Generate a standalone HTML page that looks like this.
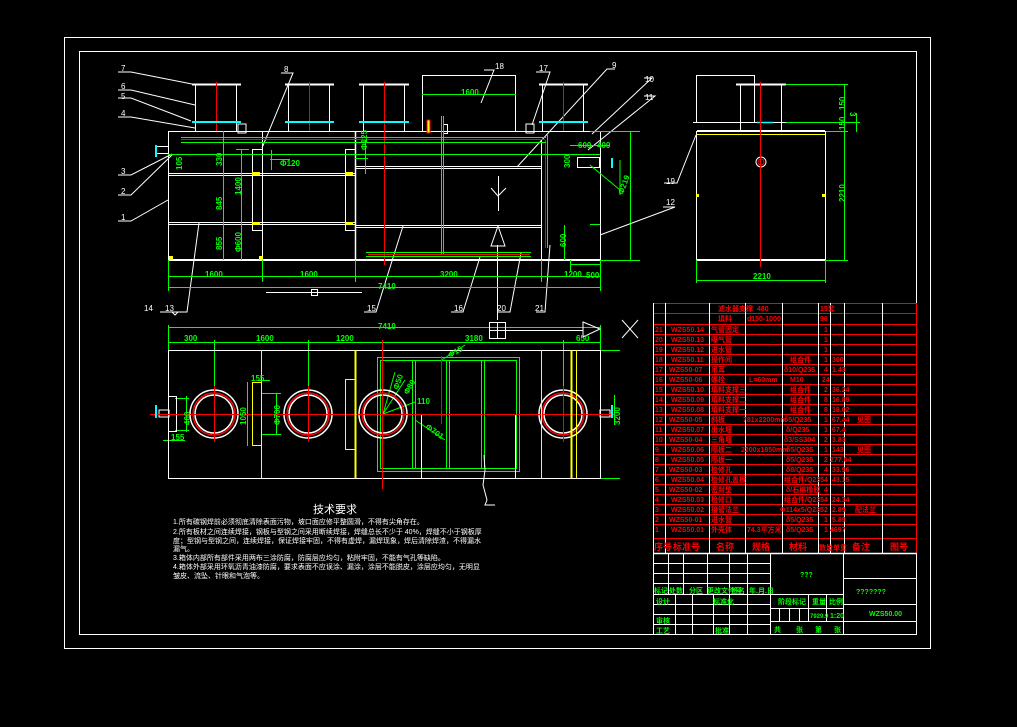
<!DOCTYPE html>
<html><head><meta charset="utf-8"><style>
html,body{margin:0;padding:0;background:#000;width:1017px;height:727px;overflow:hidden}
svg{display:block}
text{font-family:"Liberation Sans","Noto Sans CJK SC",sans-serif}
</style></head><body>
<svg width="1017" height="727" viewBox="0 0 1017 727" xmlns="http://www.w3.org/2000/svg">
<rect width="1017" height="727" fill="#000"/>
<rect x="64.5" y="37.5" width="866" height="611" fill="none" stroke="#fff" stroke-width="1"/>
<rect x="79.5" y="51.5" width="837" height="583" fill="none" stroke="#fff" stroke-width="1"/>

<g stroke="#fff" fill="none" stroke-width="1">
<rect x="168.5" y="131.5" width="432" height="129"/>
<line x1="168" y1="260" x2="600" y2="260" stroke-width="2"/>
<line x1="169" y1="173.5" x2="355" y2="173.5"/><line x1="169" y1="175.5" x2="355" y2="175.5"/>
<line x1="169" y1="222.5" x2="355" y2="222.5"/><line x1="169" y1="224.5" x2="355" y2="224.5"/>
<line x1="356" y1="166.5" x2="541" y2="166.5"/><line x1="356" y1="168.5" x2="541" y2="168.5"/>
<line x1="356" y1="225.5" x2="541" y2="225.5"/><line x1="356" y1="227.5" x2="541" y2="227.5"/>
<line x1="355.5" y1="131" x2="355.5" y2="260" stroke-width="1.5"/>
<line x1="262.5" y1="131" x2="262.5" y2="260"/>
<rect x="252.5" y="149.5" width="10" height="81"/>
<rect x="345.5" y="149.5" width="10" height="81"/>
<line x1="541.5" y1="140" x2="541.5" y2="260"/>
<g>
<line x1="192" y1="84.5" x2="241" y2="84.5" stroke-width="2"/><line x1="195.5" y1="85" x2="195.5" y2="131"/><line x1="236.5" y1="85" x2="236.5" y2="131"/>
<line x1="285" y1="84.5" x2="334" y2="84.5" stroke-width="2"/><line x1="288.5" y1="85" x2="288.5" y2="131"/><line x1="329.5" y1="85" x2="329.5" y2="131"/>
<line x1="359" y1="84.5" x2="409" y2="84.5" stroke-width="2"/><line x1="363.5" y1="85" x2="363.5" y2="131"/><line x1="404.5" y1="85" x2="404.5" y2="131"/>
<line x1="539" y1="84.5" x2="588" y2="84.5" stroke-width="2"/><line x1="542.5" y1="85" x2="542.5" y2="131"/><line x1="583.5" y1="85" x2="583.5" y2="131"/>
<rect x="422.5" y="75.5" width="93" height="56"/>
</g>
<rect x="443.5" y="124.5" width="4" height="9"/>
<rect x="238" y="124" width="8" height="9"/><rect x="526" y="124" width="8" height="9"/>
<rect x="577.5" y="157.5" width="22" height="10"/>
<rect x="156.5" y="146.5" width="12" height="7"/>
<polyline points="118,72 131,72 192,84"/>
<polyline points="118,90 131,90 195,105"/>
<polyline points="118,98 131,98 191,121"/>
<polyline points="118,117 131,117 195,128"/>
<polyline points="118,175 131,175 172,154"/>
<polyline points="118,195 131,195 172,155"/>
<polyline points="118,221 131,221 168,200"/>
<polyline points="281,73 293,73 262,148"/>
<polyline points="160,312 180,312"/><polyline points="172,312 175,315 178,312"/>
<polyline points="173,312 187,312 199,223"/>
<polyline points="364,312 376,312 403,226"/>
<polyline points="451,312 463,312 480,257"/>
<polyline points="497,312 510,312 521,253"/>
<polyline points="536,312 545,312 550,245"/>
<polyline points="484,70 494,70 481,103"/>
<polyline points="536,72 550,72 532,125"/>
<polyline points="615,69 607,69 517,167"/>
<polyline points="644,78 652,78 592,134"/>
<polyline points="644,96 655,96 588,150"/>
<line x1="266" y1="292.5" x2="362" y2="292.5"/><rect x="311.5" y="289.5" width="6" height="6"/>
<line x1="498.5" y1="176" x2="498.5" y2="211"/><polyline points="491,188 498,196 506,188"/>
<polygon points="498,226 491,246 505,246"/>
<line x1="497.5" y1="245" x2="497.5" y2="320"/>
</g>
<g stroke="#f00" stroke-width="1">
<line x1="216.5" y1="82" x2="216.5" y2="131"/><line x1="309.5" y1="82" x2="309.5" y2="131"/>
<line x1="384.5" y1="82" x2="384.5" y2="265"/><line x1="563.5" y1="82" x2="563.5" y2="131"/>
<line x1="181" y1="139.5" x2="545" y2="139.5"/>
<line x1="368" y1="254.5" x2="530" y2="254.5"/>
<line x1="545.5" y1="140" x2="545.5" y2="248"/>
<rect x="427" y="120" width="3" height="13" fill="#ff0"/>
</g>
<g stroke="#0ff" stroke-width="2">
<line x1="192" y1="122" x2="241" y2="122"/><line x1="285" y1="122" x2="334" y2="122"/>
<line x1="359" y1="122" x2="409" y2="122"/><line x1="539" y1="122" x2="588" y2="122"/>
<line x1="156" y1="145" x2="156" y2="157"/>
<line x1="612" y1="158" x2="612" y2="168"/>
</g>
<g stroke="#0f0" fill="none" stroke-width="1">
<line x1="181" y1="137.5" x2="546" y2="137.5"/><line x1="181" y1="142.5" x2="546" y2="142.5"/>
<line x1="168" y1="154.5" x2="600" y2="154.5"/>
<line x1="441.5" y1="116" x2="441.5" y2="254"/><line x1="443.5" y1="116" x2="443.5" y2="254"/>
<line x1="366" y1="252.5" x2="531" y2="252.5"/><line x1="366" y1="256.5" x2="531" y2="256.5"/>
<line x1="547.5" y1="134" x2="547.5" y2="248"/>
<line x1="223.5" y1="131" x2="223.5" y2="260"/>
<line x1="241.5" y1="149" x2="241.5" y2="260"/>
<line x1="168.5" y1="260" x2="168.5" y2="291"/>
<line x1="600.5" y1="260" x2="600.5" y2="291"/>
<line x1="262.5" y1="260" x2="262.5" y2="282"/>
<line x1="355.5" y1="260" x2="355.5" y2="282"/>
<line x1="541.5" y1="260" x2="541.5" y2="282"/>
<line x1="168" y1="276.5" x2="600" y2="276.5"/>
<line x1="168" y1="287.5" x2="600" y2="287.5"/>
<line x1="422" y1="94.5" x2="516" y2="94.5"/>
<line x1="590" y1="131.5" x2="640" y2="131.5"/>
<line x1="570" y1="145.5" x2="610" y2="145.5"/>
<line x1="600" y1="260.5" x2="640" y2="260.5"/>
<line x1="590" y1="224.5" x2="600" y2="224.5"/>
<line x1="564.5" y1="225" x2="564.5" y2="260"/>
<line x1="570" y1="264.5" x2="600" y2="264.5"/>
<line x1="570.5" y1="260" x2="570.5" y2="272"/>
<line x1="236" y1="149.5" x2="249" y2="149.5"/><line x1="270" y1="159.5" x2="290" y2="159.5"/>
<line x1="271.5" y1="150" x2="271.5" y2="170"/>
<line x1="355" y1="158.5" x2="368" y2="158.5"/>
<line x1="365.5" y1="140" x2="365.5" y2="174"/>
<line x1="590" y1="165" x2="620" y2="190"/>
<line x1="620" y1="160" x2="620" y2="195"/>
<line x1="630.5" y1="131" x2="630.5" y2="260"/>
</g>
<g fill="#0f0" font-size="9" font-weight="bold">
<text x="205" y="277" font-size="8">1600</text><text x="300" y="277" font-size="8">1600</text>
<text x="440" y="277" font-size="8">3200</text><text x="564" y="277" font-size="8">1200</text>
<text x="378" y="289" font-size="8">7410</text>
<text x="461" y="95" font-size="8">1600</text>
<text x="280" y="166" font-size="8">Φ120</text>
<text x="578" y="148" font-size="8">600</text><text x="597" y="148" font-size="8">400</text>
<text x="586" y="278" font-size="8">500</text>
<text transform="translate(222,166) rotate(-90)" font-size="8">330</text>
<text transform="translate(222,210) rotate(-90)" font-size="8">845</text>
<text transform="translate(222,250) rotate(-90)" font-size="8">855</text>
<text transform="translate(241,195) rotate(-90)" font-size="8">1400</text>
<text transform="translate(241,252) rotate(-90)" font-size="8">Φ600</text>
<text transform="translate(182,170) rotate(-90)" font-size="8">105</text>
<text transform="translate(367,150) rotate(-90)" font-size="8">Φ125</text>
<text transform="translate(566,247) rotate(-90)" font-size="8">600</text>
<text transform="translate(570,168) rotate(-90)" font-size="8">300</text>
<text transform="translate(623,195) rotate(-70)" font-size="8">Φ219</text>
</g>
<g fill="#fff" font-size="8">
<text x="121" y="71">7</text><text x="121" y="89">6</text><text x="121" y="99">5</text><text x="121" y="116">4</text>
<text x="121" y="174">3</text><text x="121" y="194">2</text><text x="121" y="220">1</text>
<text x="284" y="72">8</text><text x="495" y="69">18</text><text x="539" y="71">17</text><text x="612" y="68">9</text>
<text x="645" y="82">10</text><text x="645" y="100">11</text><text x="666" y="205">12</text><text x="666" y="184">19</text>
<text x="144" y="311">14</text><text x="165" y="311">13</text><text x="367" y="311">15</text>
<text x="454" y="311">16</text><text x="497" y="311">20</text><text x="535" y="311">21</text>
</g>
<g fill="#ff0">
<rect x="169" y="256" width="4" height="4"/><rect x="259" y="256" width="4" height="4"/>
<rect x="252" y="172" width="8" height="3"/><rect x="252" y="222" width="8" height="3"/>
<rect x="345" y="172" width="8" height="3"/><rect x="345" y="222" width="8" height="3"/>
</g>

<g stroke="#fff" fill="none">
<rect x="696.5" y="131.5" width="129" height="128"/>
<line x1="696" y1="260" x2="826" y2="260" stroke-width="2"/>
<rect x="696.5" y="75.5" width="58" height="47"/>
<line x1="736" y1="84.5" x2="786" y2="84.5" stroke-width="2"/>
<line x1="740.5" y1="85" x2="740.5" y2="131"/><line x1="781.5" y1="85" x2="781.5" y2="131"/>
<line x1="693" y1="122.5" x2="786" y2="122.5"/>
<line x1="697" y1="130.5" x2="825" y2="130.5"/>
<polyline points="664,183 677,183 696,135"/>
<polyline points="663,207 675,207 600,235"/>
<circle cx="761" cy="162" r="5"/>
</g>
<line x1="697" y1="134.5" x2="825" y2="134.5" stroke="#ff0"/>
<line x1="757" y1="122.5" x2="773" y2="122.5" stroke="#0ff" stroke-width="1.5"/>
<line x1="760.5" y1="82" x2="760.5" y2="267" stroke="#f00"/>
<circle cx="761" cy="162" r="3" fill="none" stroke="#f00"/>
<rect x="696" y="194" width="3" height="3" fill="#ff0"/><rect x="822" y="194" width="3" height="3" fill="#ff0"/>
<g stroke="#0f0" fill="none">
<line x1="786" y1="84.5" x2="848" y2="84.5"/><line x1="786" y1="122.5" x2="860" y2="122.5"/>
<line x1="826" y1="131.5" x2="848" y2="131.5"/><line x1="826" y1="260.5" x2="848" y2="260.5"/>
<line x1="844.5" y1="84" x2="844.5" y2="260"/>
<line x1="856.5" y1="113" x2="856.5" y2="132"/>
<line x1="696.5" y1="260" x2="696.5" y2="283"/><line x1="825.5" y1="260" x2="825.5" y2="283"/>
<line x1="696" y1="280.5" x2="826" y2="280.5"/>
</g>
<g fill="#0f0" font-size="8" font-weight="bold">
<text x="753" y="279">2210</text>
<text transform="translate(845,110) rotate(-90)">150</text>
<text transform="translate(845,130) rotate(-90)">150</text>
<text transform="translate(845,202) rotate(-90)">2210</text>
<text transform="translate(850,112) rotate(90)">3</text>
</g>

<g stroke="#0f0" fill="none">
<line x1="168" y1="327.5" x2="600" y2="327.5"/>
<line x1="168" y1="342.5" x2="600" y2="342.5"/>
<line x1="168.5" y1="325" x2="168.5" y2="350"/><line x1="600.5" y1="325" x2="600.5" y2="350"/>
<line x1="214.5" y1="340" x2="214.5" y2="414"/><line x1="308.5" y1="340" x2="308.5" y2="414"/>
<line x1="563.5" y1="340" x2="563.5" y2="414"/>
<rect x="377.5" y="357.5" width="142" height="114"/>
<rect x="380.5" y="360.5" width="136" height="108"/>
<line x1="412.5" y1="360" x2="412.5" y2="469"/><line x1="415.5" y1="360" x2="415.5" y2="469"/>
<line x1="446.5" y1="360" x2="446.5" y2="469"/><line x1="449.5" y1="360" x2="449.5" y2="469"/>
<line x1="481.5" y1="360" x2="481.5" y2="469"/><line x1="484.5" y1="360" x2="484.5" y2="469"/>
<line x1="383" y1="414" x2="395" y2="372"/><line x1="383" y1="414" x2="405" y2="380"/>
<line x1="383" y1="414" x2="415" y2="402"/><line x1="415" y1="420" x2="445" y2="440"/>
<line x1="440" y1="361" x2="465" y2="345"/>
<line x1="175" y1="398.5" x2="189" y2="398.5"/><line x1="175" y1="430.5" x2="189" y2="430.5"/>
<line x1="186.5" y1="396" x2="186.5" y2="432"/>
<line x1="163" y1="440.5" x2="185" y2="440.5"/>
<line x1="247.5" y1="382" x2="247.5" y2="446"/>
<line x1="258" y1="380.5" x2="270" y2="380.5"/>
<line x1="261" y1="393.5" x2="281" y2="393.5"/><line x1="261" y1="434.5" x2="281" y2="434.5"/>
<line x1="276.5" y1="393" x2="276.5" y2="434"/>
<line x1="600" y1="350.5" x2="620" y2="350.5"/><line x1="600" y1="478.5" x2="620" y2="478.5"/>
<line x1="614.5" y1="395" x2="614.5" y2="425"/>
</g>
<g stroke="#fff" fill="none">
<rect x="168.5" y="350.5" width="432" height="128"/>
<rect x="168.5" y="396.5" width="8" height="35"/>
<rect x="421.5" y="414.5" width="94" height="64"/>
<rect x="489.5" y="322.5" width="16" height="16"/><line x1="497.5" y1="323" x2="497.5" y2="338"/><line x1="490" y1="330.5" x2="505" y2="330.5"/>
<line x1="505" y1="330.5" x2="583" y2="330.5"/>
<polygon points="583,322 600,329 583,337"/>
<line x1="622" y1="320" x2="638" y2="338"/><line x1="638" y1="320" x2="622" y2="338"/>
<polyline points="484,455 485,470 483,485 487,500 485,505 495,505"/>
<rect x="159" y="410" width="10" height="7"/><rect x="600" y="410" width="10" height="7"/>
</g>
<g stroke-width="1.5" fill="none">
<circle cx="214" cy="414" r="24" stroke="#fff"/><circle cx="214" cy="414" r="21" stroke="#f00"/><circle cx="214" cy="414" r="19" stroke="#fff"/>
<circle cx="308" cy="414" r="24" stroke="#fff"/><circle cx="308" cy="414" r="21" stroke="#f00"/><circle cx="308" cy="414" r="19" stroke="#fff"/>
<circle cx="383" cy="414" r="24" stroke="#fff"/><circle cx="383" cy="414" r="21" stroke="#f00"/><circle cx="383" cy="414" r="19" stroke="#fff"/>
<circle cx="563" cy="414" r="24" stroke="#fff"/><circle cx="563" cy="414" r="21" stroke="#f00"/><circle cx="563" cy="414" r="19" stroke="#fff"/>
</g>
<g stroke="#f00">
<line x1="150" y1="414.5" x2="615" y2="414.5"/>
<line x1="214.5" y1="386" x2="214.5" y2="442"/><line x1="308.5" y1="386" x2="308.5" y2="442"/>
<line x1="382.5" y1="340" x2="382.5" y2="489"/><line x1="563.5" y1="386" x2="563.5" y2="442"/>
<line x1="441.5" y1="356" x2="441.5" y2="424"/>
</g>
<g stroke="#ff0" fill="none">
<line x1="261.5" y1="350" x2="261.5" y2="478"/>
<line x1="355.5" y1="350" x2="355.5" y2="478" stroke-width="2"/>
<line x1="571.5" y1="350" x2="571.5" y2="478" stroke-width="2"/>
<line x1="576.5" y1="350" x2="576.5" y2="478"/>
<line x1="541.5" y1="350" x2="541.5" y2="478"/>
<rect x="252.5" y="382.5" width="9" height="63"/>
<rect x="345.5" y="379.5" width="10" height="70"/>
</g>
<line x1="156" y1="405" x2="156" y2="418" stroke="#0ff" stroke-width="2"/>
<line x1="612" y1="405" x2="612" y2="418" stroke="#0ff" stroke-width="2"/>
<g fill="#0f0" font-size="8" font-weight="bold">
<text x="184" y="341">300</text><text x="256" y="341">1600</text><text x="336" y="341">1200</text>
<text x="465" y="341">3180</text><text x="576" y="341">650</text><text x="378" y="329">7410</text>
<text x="251" y="381">155</text><text x="171" y="440">155</text>
<text transform="translate(190,425) rotate(-90)">400</text>
<text transform="translate(246,425) rotate(-90)">1050</text>
<text transform="translate(280,425) rotate(-90)">Φ700</text>
<text transform="translate(620,425) rotate(-90)">3200</text>
<text transform="translate(398,390) rotate(-70)">Φ50</text>
<text transform="translate(408,395) rotate(-60)">Φ80</text>
<text x="417" y="404">110</text>
<text transform="translate(425,428) rotate(35)">Φ701</text>
<text transform="translate(450,358) rotate(-30)">Φ15</text>
</g>

<g fill="#fff">
<text x="313" y="513" font-size="11">技术要求</text>
<g font-size="7">
<text x="173" y="524">1.所有碳钢焊前必须彻底清除表面污物，坡口面应修平整圆滑，不得有尖角存在。</text>
<text x="173" y="534">2.所有板材之间连续焊接，钢板与型钢之间采用断续焊接，焊缝总长不少于 40%，焊缝不小于钢板厚</text>
<text x="173" y="543">度；型钢与型钢之间，连续焊接，保证焊接牢固，不得有虚焊，漏焊现象，焊后清除焊渣，不得漏水</text>
<text x="173" y="551">漏气。</text>
<text x="173" y="560">3.箱体内部所有部件采用两布三涂防腐，防腐层应均匀，粘附牢固，不能有气孔等缺陷。</text>
<text x="173" y="569">4.箱体外部采用环氧沥青油漆防腐，要求表面不应误涂、漏涂，涂层不能脱皮，涂层应均匀，无明显</text>
<text x="173" y="578">皱皮、流坠、针眼和气泡等。</text>
</g>
</g>

<g stroke="#f00" stroke-width="1" fill="none">
<rect x="653.5" y="303.5" width="263" height="250"/>
<line x1="653" y1="313.5" x2="917" y2="313.5"/><line x1="653" y1="324.5" x2="917" y2="324.5"/>
<line x1="653" y1="334.5" x2="917" y2="334.5"/><line x1="653" y1="344.5" x2="917" y2="344.5"/>
<line x1="653" y1="354.5" x2="917" y2="354.5"/><line x1="653" y1="364.5" x2="917" y2="364.5"/>
<line x1="653" y1="374.5" x2="917" y2="374.5"/><line x1="653" y1="384.5" x2="917" y2="384.5"/>
<line x1="653" y1="394.5" x2="917" y2="394.5"/><line x1="653" y1="404.5" x2="917" y2="404.5"/>
<line x1="653" y1="414.5" x2="917" y2="414.5"/><line x1="653" y1="424.5" x2="917" y2="424.5"/>
<line x1="653" y1="434.5" x2="917" y2="434.5"/><line x1="653" y1="444.5" x2="917" y2="444.5"/>
<line x1="653" y1="454.5" x2="917" y2="454.5"/><line x1="653" y1="464.5" x2="917" y2="464.5"/>
<line x1="653" y1="474.5" x2="917" y2="474.5"/><line x1="653" y1="484.5" x2="917" y2="484.5"/>
<line x1="653" y1="494.5" x2="917" y2="494.5"/><line x1="653" y1="504.5" x2="917" y2="504.5"/>
<line x1="653" y1="514.5" x2="917" y2="514.5"/><line x1="653" y1="524.5" x2="917" y2="524.5"/>
<line x1="653" y1="538.5" x2="917" y2="538.5"/>
</g>
<g stroke="#fff" stroke-width="1">
<line x1="665.5" y1="303" x2="665.5" y2="553"/><line x1="709.5" y1="303" x2="709.5" y2="553"/>
<line x1="745.5" y1="303" x2="745.5" y2="553"/><line x1="782.5" y1="303" x2="782.5" y2="553"/>
<line x1="818.5" y1="303" x2="818.5" y2="553"/><line x1="830.5" y1="303" x2="830.5" y2="553"/>
<line x1="844.5" y1="303" x2="844.5" y2="553"/><line x1="882.5" y1="303" x2="882.5" y2="553"/>
<line x1="653.5" y1="303" x2="653.5" y2="634"/>
</g>
<g fill="#f00" font-size="7" font-weight="bold">
<text x="718" y="311">滤水器支撑</text><text x="757" y="311">480</text><text x="820" y="311">15套</text>
<text x="718" y="321">填料</text><text x="747" y="321">d150-1000</text><text x="820" y="321">96</text>
<text x="655" y="332">21</text><text x="671" y="332">WZS50.14</text><text x="711" y="332">气管固定</text><text x="824" y="332">1</text>
<text x="655" y="342">20</text><text x="671" y="342">WZS50.13</text><text x="711" y="342">曝气管</text><text x="824" y="342">1</text>
<text x="655" y="352">19</text><text x="671" y="352">WZS50.12</text><text x="711" y="352">进水管</text><text x="824" y="352">1</text>
<text x="655" y="362">18</text><text x="671" y="362">WZS50.11</text><text x="711" y="362">操作间</text><text x="790" y="362">组合件</text><text x="824" y="362">1</text><text x="832" y="362">300</text>
<text x="655" y="372">17</text><text x="669" y="372">WZS50-07</text><text x="711" y="372">吊耳</text><text x="784" y="372">δ10/Q235</text><text x="824" y="372">4</text><text x="832" y="372">1.43</text>
<text x="655" y="382">16</text><text x="669" y="382">WZS50-06</text><text x="711" y="382">螺栓</text><text x="749" y="382">L=60mm</text><text x="790" y="382">M10</text><text x="822" y="382">24</text>
<text x="655" y="392">15</text><text x="671" y="392">WZS50.10</text><text x="711" y="392">填料支撑三</text><text x="790" y="392">组合件</text><text x="824" y="392">2</text><text x="832" y="392">36.24</text>
<text x="655" y="402">14</text><text x="671" y="402">WZS50.09</text><text x="711" y="402">填料支撑二</text><text x="790" y="402">组合件</text><text x="824" y="402">8</text><text x="832" y="402">16.89</text>
<text x="655" y="412">13</text><text x="671" y="412">WZS50.08</text><text x="711" y="412">填料支撑一</text><text x="790" y="412">组合件</text><text x="824" y="412">8</text><text x="832" y="412">18.02</text>
<text x="655" y="422">12</text><text x="669" y="422">WZS50-05</text><text x="711" y="422">斜板</text><text x="743" y="422">781x2200mm</text><text x="784" y="422">δ5/Q235</text><text x="824" y="422">1</text><text x="832" y="422">67.44</text><text x="857" y="422">见图</text>
<text x="655" y="432">11</text><text x="671" y="432">WZS50.07</text><text x="711" y="432">出水堰</text><text x="786" y="432">δ/Q235</text><text x="824" y="432">1</text><text x="832" y="432">67.4</text>
<text x="655" y="442">10</text><text x="669" y="442">WZS50-04</text><text x="711" y="442">三角堰</text><text x="784" y="442">δ3/SS304</text><text x="824" y="442">2</text><text x="832" y="442">3.83</text>
<text x="655" y="452">9</text><text x="671" y="452">WZS50.06</text><text x="711" y="452">隔板二</text><text x="741" y="452">2200x1850mm</text><text x="786" y="452">δ5/Q235</text><text x="824" y="452">1</text><text x="832" y="452">143</text><text x="857" y="452">见图</text>
<text x="655" y="462">8</text><text x="671" y="462">WZS50.05</text><text x="711" y="462">隔板一</text><text x="786" y="462">δ5/Q235</text><text x="824" y="462">2</text><text x="830" y="462">277.04</text>
<text x="655" y="472">7</text><text x="669" y="472">WZS50-03</text><text x="711" y="472">检修孔</text><text x="786" y="472">δ8/Q235</text><text x="824" y="472">4</text><text x="832" y="472">33.96</text>
<text x="655" y="482">6</text><text x="671" y="482">WZS50.04</text><text x="711" y="482">检修孔盖板</text><text x="784" y="482">组合件/Q235</text><text x="824" y="482">4</text><text x="832" y="482">43.15</text>
<text x="655" y="492">5</text><text x="669" y="492">WZS50-02</text><text x="711" y="492">密封垫</text><text x="786" y="492">δ/石棉橡胶</text><text x="824" y="492">4</text>
<text x="655" y="502">4</text><text x="671" y="502">WZS50.03</text><text x="711" y="502">检修口</text><text x="784" y="502">组合件/Q235</text><text x="824" y="502">4</text><text x="832" y="502">24.34</text>
<text x="655" y="512">3</text><text x="671" y="512">WZS50.02</text><text x="711" y="512">接管法兰</text><text x="780" y="512">Φ114x5/Q235</text><text x="824" y="512">2</text><text x="832" y="512">2.89</text><text x="855" y="512">配法兰</text>
<text x="655" y="522">2</text><text x="669" y="522">WZS50-01</text><text x="711" y="522">进水管</text><text x="786" y="522">δ5/Q235</text><text x="824" y="522">1</text><text x="832" y="522">5.89</text>
<text x="655" y="532">1</text><text x="671" y="532">WZS50.01</text><text x="711" y="532">外壳体</text><text x="747" y="532">74.3平方米</text><text x="786" y="532">δ5/Q235</text><text x="824" y="532">1</text><text x="830" y="532">4697</text>
<g font-size="9" font-weight="bold">
<text x="654" y="550">序号</text><text x="673" y="550">标准号</text><text x="716" y="550">名称</text><text x="752" y="550">规格</text>
<text x="789" y="550">材料</text><text x="819" y="550" font-size="7">数量单重</text><text x="852" y="550">备注</text><text x="890" y="550">图号</text>
</g>
</g>

<g stroke="#fff" fill="none">
<line x1="653" y1="553.5" x2="917" y2="553.5" stroke-width="1.5"/>
<line x1="653" y1="563.5" x2="770" y2="563.5"/><line x1="653" y1="573.5" x2="770" y2="573.5"/>
<line x1="653" y1="583.5" x2="770" y2="583.5"/><line x1="653" y1="594.5" x2="843" y2="594.5"/>
<line x1="653" y1="604.5" x2="770" y2="604.5"/><line x1="653" y1="614.5" x2="770" y2="614.5"/>
<line x1="653" y1="624.5" x2="770" y2="624.5"/>
<line x1="668.5" y1="553" x2="668.5" y2="594"/><line x1="683.5" y1="553" x2="683.5" y2="594"/>
<line x1="707.5" y1="553" x2="707.5" y2="594"/><line x1="729.5" y1="553" x2="729.5" y2="594"/>
<line x1="747.5" y1="553" x2="747.5" y2="594"/>
<line x1="675.5" y1="594" x2="675.5" y2="634"/><line x1="692.5" y1="594" x2="692.5" y2="634"/>
<line x1="713.5" y1="594" x2="713.5" y2="634"/><line x1="729.5" y1="594" x2="729.5" y2="634"/>
<line x1="747.5" y1="594" x2="747.5" y2="634"/>
<line x1="770.5" y1="553" x2="770.5" y2="634"/>
<line x1="843.5" y1="553" x2="843.5" y2="634"/>
<line x1="770" y1="608.5" x2="843" y2="608.5"/><line x1="770" y1="621.5" x2="843" y2="621.5"/>
<line x1="808.5" y1="594" x2="808.5" y2="621"/><line x1="826.5" y1="594" x2="826.5" y2="621"/>
<line x1="779.5" y1="608" x2="779.5" y2="621"/><line x1="789.5" y1="608" x2="789.5" y2="621"/><line x1="799.5" y1="608" x2="799.5" y2="621"/>
<line x1="843" y1="578.5" x2="917" y2="578.5"/><line x1="843" y1="604.5" x2="917" y2="604.5"/>
<line x1="843" y1="621.5" x2="917" y2="621.5"/>
</g>
<g fill="#0f0" font-size="7" font-weight="bold">
<text x="800" y="577">???</text>
<text x="856" y="594">???????</text>
<text x="869" y="616">WZS50.00</text>
<text x="654" y="593">标记</text><text x="669" y="593">处数</text><text x="689" y="593">分区</text><text x="707" y="593">更改文件号</text><text x="731" y="593">签名</text><text x="749" y="593">年.月.日</text>
<text x="656" y="604">设计</text><text x="713" y="604">标准化</text>
<text x="656" y="623">审核</text><text x="656" y="633">工艺</text><text x="715" y="633">批准</text>
<text x="778" y="604">阶段标记</text><text x="812" y="604">重量</text><text x="829" y="604">比例</text>
<text x="810" y="618" font-size="6">7929.9</text><text x="830" y="618">1:20</text>
<text x="774" y="632">共</text><text x="796" y="632">张</text><text x="815" y="632">第</text><text x="834" y="632">张</text>
</g>
</svg>
</body></html>
